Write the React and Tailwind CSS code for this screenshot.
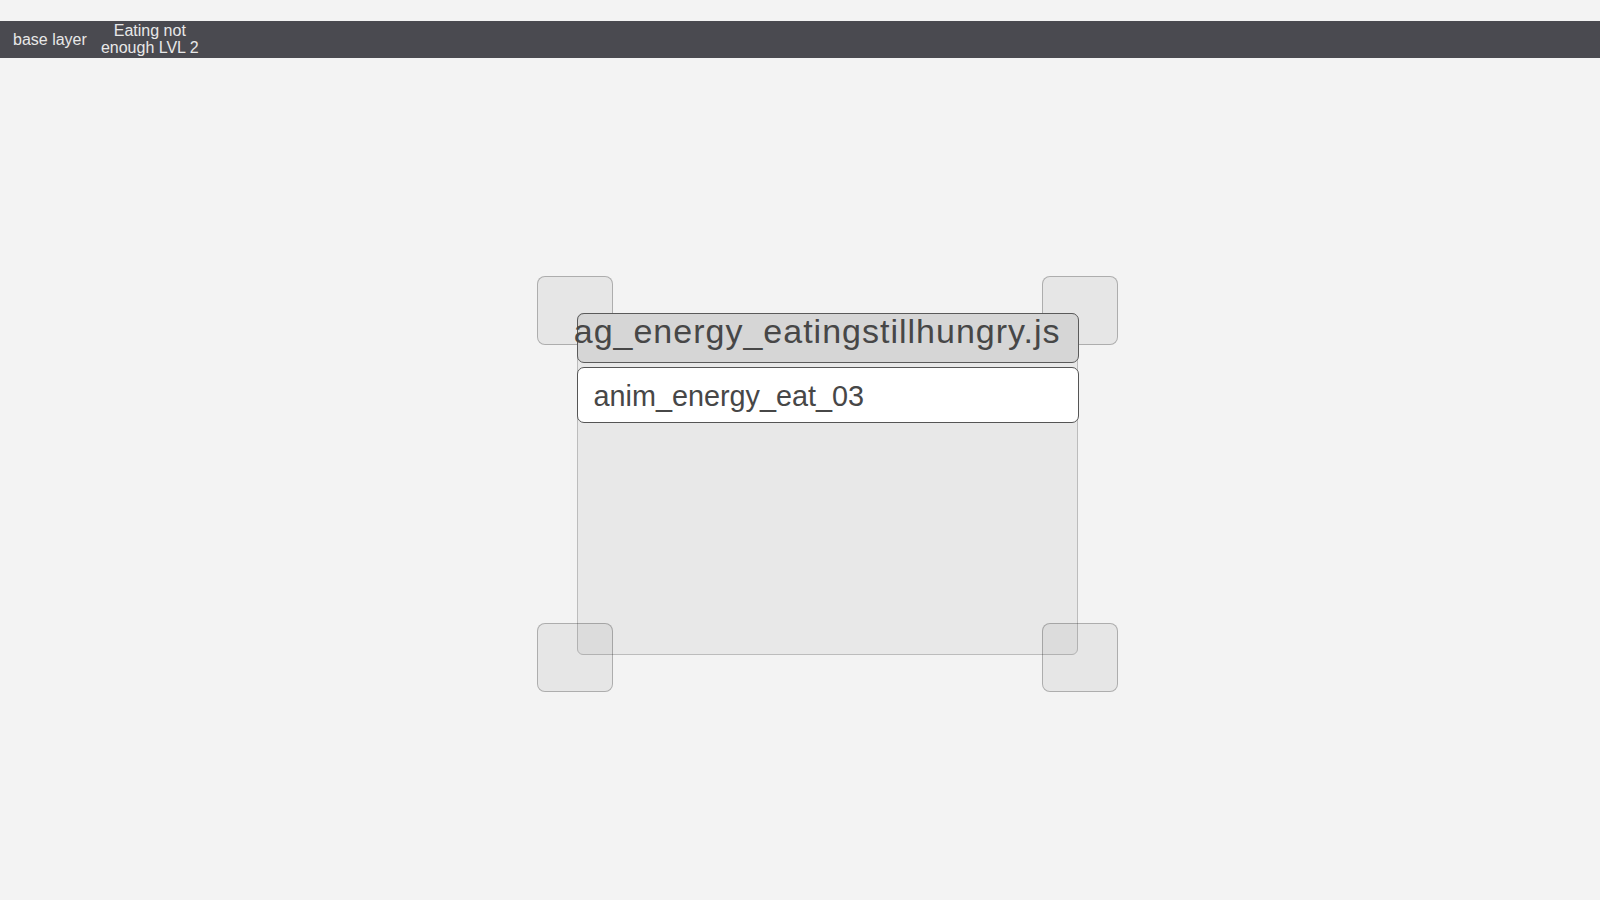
export default function App() {
  const font = { fontFamily: '"Liberation Sans", Arial, sans-serif' };
  return (
    <div className="w-[1600px] h-[900px] bg-[#f3f3f3] flex flex-col overflow-hidden" style={font}>
      <div className="h-[21px] shrink-0" />
      <div className="h-[37px] shrink-0 bg-[#4a4a50] flex items-center text-[#e8e8e8] text-[16px]">
        <div className="pl-[13px] pr-[13px] leading-[18px]">base layer</div>
        <div className="w-[100px] text-center leading-[17px] -mt-[1px]">
          Eating not
          <br />
          enough LVL 2
        </div>
      </div>
      <div className="flex-1 pt-[218px] pl-[537px]">
        <div className="relative w-[581px] h-[416px] px-[40px] py-[37px]">
          <div className="relative w-full h-full rounded-[6px] border border-[#bcbcbc] bg-[#e8e8e8] flex flex-col">
            <div className="absolute -left-[41px] -top-[38px] w-[76px] h-[69px] rounded-[8px] border border-black/25 bg-black/5" />
            <div className="absolute -right-[41px] -top-[38px] w-[76px] h-[69px] rounded-[8px] border border-black/25 bg-black/5" />
            <div className="absolute -left-[41px] -bottom-[38px] w-[76px] h-[69px] rounded-[8px] border border-black/25 bg-black/5" />
            <div className="absolute -right-[41px] -bottom-[38px] w-[76px] h-[69px] rounded-[8px] border border-black/25 bg-black/5" />
            <div className="relative -mx-[1.5px] -mt-px h-[50px] rounded-[7px] border-[1.5px] border-[#5a5a5a] bg-[#d6d6d6] flex items-start justify-end pr-[17px] overflow-visible">
              <span className="whitespace-nowrap text-[34px] leading-[34px] tracking-[1px] text-[#474747]">
                ag_energy_eatingstillhungry.js
              </span>
            </div>
            <div className="relative -mx-[1.5px] mt-[4px] h-[56px] rounded-[7px] border-[1.5px] border-[#555555] bg-white flex items-center pl-[16px] pt-[3px]">
              <span className="whitespace-nowrap text-[28.8px] text-[#474747]">anim_energy_eat_03</span>
            </div>
          </div>
        </div>
      </div>
    </div>
  );
}
